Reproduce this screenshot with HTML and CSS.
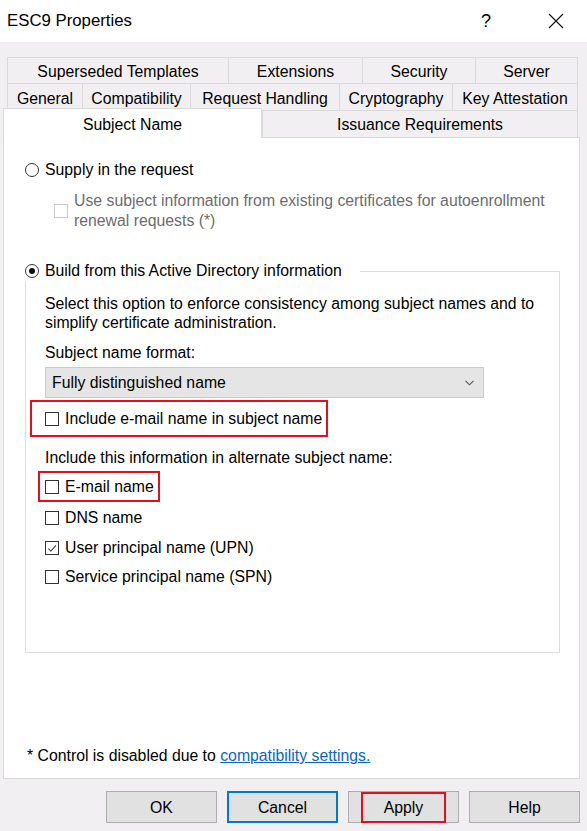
FILE: index.html
```html
<!DOCTYPE html>
<html>
<head>
<meta charset="utf-8">
<link rel="stylesheet" href="styles.css">
</head>
<body>
<div class="titlebar">
  <span class="title">ESC9 Properties</span>
  <span class="help-btn">?</span>
  <span class="close-btn"><svg width="16" height="16" viewBox="0 0 16 16"><path d="M1 1 L15 15 M15 1 L1 15" stroke="#111" stroke-width="1.1" fill="none"/></svg></span>
</div>
<div class="content">
  <div class="tabrow row-a">
    <div class="tab t-superseded">Superseded Templates</div>
    <div class="tab t-extensions">Extensions</div>
    <div class="tab t-security">Security</div>
    <div class="tab t-server">Server</div>
  </div>
  <div class="tabrow row-b">
    <div class="tab t-general">General</div>
    <div class="tab t-compat">Compatibility</div>
    <div class="tab t-request">Request Handling</div>
    <div class="tab t-crypto">Cryptography</div>
    <div class="tab t-key">Key Attestation</div>
  </div>
  <div class="tabrow row-c">
    <div class="tab tab-selected">Subject Name</div>
    <div class="tab t-issuance">Issuance Requirements</div>
  </div>
  <div class="panel">
    <div class="option">
      <span class="rb"></span>
      <span>Supply in the request</span>
    </div>
    <div class="option disabled-opt">
      <span class="cb cb-disabled"></span>
      <span class="disabled-text">Use subject information from existing certificates for autoenrollment renewal requests (*)</span>
    </div>
    <fieldset class="group">
      <legend class="option legend">
        <span class="rb rb-on"></span>
        <span>Build from this Active Directory information</span>
      </legend>
      <p class="desc">Select this option to enforce consistency among subject names and to simplify certificate administration.</p>
      <div class="label-line">Subject name format:</div>
      <div class="select">
        <span>Fully distinguished name</span>
        <svg width="9" height="6" viewBox="0 0 9 6"><path d="M0.5 0.8 L4.5 4.8 L8.5 0.8" stroke="#555" stroke-width="1.1" fill="none"/></svg>
      </div>
      <div class="hl hl-include">
        <span class="cb"></span>
        <span>Include e-mail name in subject name</span>
      </div>
      <div class="label-line alt-label">Include this information in alternate subject name:</div>
      <div class="hl hl-email">
        <span class="cb"></span>
        <span>E-mail name</span>
      </div>
      <div class="check-row">
        <span class="cb"></span>
        <span>DNS name</span>
      </div>
      <div class="check-row">
        <span class="cb"><svg width="13" height="13" viewBox="0 0 13 13"><path d="M2.5 6.5 L5.2 9.3 L10.8 3.2" stroke="#333" stroke-width="1.1" fill="none"/></svg></span>
        <span>User principal name (UPN)</span>
      </div>
      <div class="check-row">
        <span class="cb"></span>
        <span>Service principal name (SPN)</span>
      </div>
    </fieldset>
    <div class="footer-note">* Control is disabled due to <a class="link" href="#">compatibility settings.</a></div>
  </div>
  <div class="buttons">
    <button class="btn">OK</button>
    <button class="btn btn-focus">Cancel</button>
    <button class="btn btn-apply">Apply<span class="apply-mark"></span></button>
    <button class="btn">Help</button>
  </div>
</div>
</body>
</html>
```

FILE: styles.css
```css
html, body {
  margin: 0;
  padding: 0;
}
body {
  width: 587px;
  height: 831px;
  overflow: hidden;
  background: #f1eff1;
  font-family: "Liberation Sans", Arial, sans-serif;
  font-size: 15.8px;
  line-height: 20px;
  color: #000;
}

/* title bar */
.titlebar {
  height: 42px;
  background: #fff;
  display: flex;
  align-items: center;
  padding-left: 7px;
  padding-right: 8px;
}
.title {
  flex: 1;
  font-size: 16.8px;
}
.help-btn {
  width: 46px;
  text-align: center;
  font-size: 18px;
}
.close-btn {
  width: 46px;
  margin-left: 24px;
  display: flex;
  justify-content: center;
}

/* tabs */
.content {
  padding-top: 15px;
}
.tabrow {
  display: flex;
}
.row-a, .row-b {
  margin-left: 7px;
}
.tab {
  box-sizing: border-box;
  border: 1px solid #dbdadb;
  border-right: none;
  border-bottom: none;
  display: flex;
  align-items: center;
  justify-content: center;
  white-space: nowrap;
  padding-top: 2px;
}
.tab:last-child {
  border-right: 1px solid #dbdadb;
}
.row-a .tab { height: 26px; }
.row-b .tab { height: 27px; padding-top: 3px; }
.t-superseded { width: 221px; }
.t-extensions { width: 134px; }
.t-security { width: 113px; }
.t-server { width: 103px; }
.t-general { width: 75px; }
.t-compat { width: 108px; }
.t-request { width: 149px; }
.t-crypto { width: 113px; }
.t-key { width: 126px; }
.row-c {
  margin-left: 3px;
  height: 27px;
  align-items: flex-end;
}
.t-issuance {
  width: 316px;
  height: 27px;
}
.tab-selected {
  width: 259px;
  height: 30px;
  margin-bottom: -1px;
  background: #fff;
  border-right: 1px solid #dbdadb;
  position: relative;
  z-index: 1;
}

/* panel */
.panel {
  box-sizing: border-box;
  margin-left: 3px;
  width: 577px;
  height: 642px;
  border: 1px solid #d9d9d9;
  background: #fff;
  display: flex;
  flex-direction: column;
  padding: 22px 0 12px 21px;
}
.option {
  display: flex;
  align-items: center;
  gap: 6px;
}
.rb {
  box-sizing: border-box;
  width: 14px;
  height: 14px;
  border: 1px solid #333;
  border-radius: 50%;
  display: flex;
  align-items: center;
  justify-content: center;
  flex: none;
}
.rb-on::after {
  content: "";
  width: 6px;
  height: 6px;
  border-radius: 50%;
  background: #111;
}
.cb {
  box-sizing: border-box;
  width: 14px;
  height: 14px;
  border: 1px solid #333;
  background: #fff;
  flex: none;
  display: flex;
}
.cb-disabled {
  border-color: #cccccc;
}
.disabled-opt {
  margin-top: 11px;
  margin-left: 29px;
  gap: 6px;
}
.disabled-text {
  width: 490px;
  color: #6d6d6d;
}

/* group */
.group {
  box-sizing: border-box;
  width: 535px;
  min-width: 0;
  margin: 30px 0 0 0;
  border: 1px solid #dcdcdc;
  padding: 0 0 60px 19px;
}
.legend {
  margin-left: -20px;
  padding: 0 18px 0 0;
  background: #fff;
}
.desc {
  margin: 13px 0 0 0;
  line-height: 19px;
}
.label-line {
  margin-top: 11px;
}
.select {
  box-sizing: border-box;
  margin-top: 4px;
  width: 439px;
  height: 31px;
  background: #e5e5e5;
  border: 1px solid #cccccc;
  display: flex;
  align-items: center;
  justify-content: space-between;
  padding: 1px 9px 0 6px;
}
.hl {
  box-sizing: border-box;
  border: 2px solid #e3101b;
  display: flex;
  align-items: center;
  gap: 6px;
}
.hl-include {
  margin-top: 2px;
  margin-left: -15px;
  width: 298px;
  height: 37px;
  padding-left: 13px;
}
.alt-label {
  margin-top: 11px;
}
.hl-email {
  margin-top: 3px;
  margin-left: -7px;
  width: 122px;
  height: 31px;
  padding-left: 5px;
}
.check-row {
  display: flex;
  align-items: center;
  gap: 6px;
  height: 29.5px;
}
.hl-email + .check-row {
  margin-top: 1.5px;
}
.footer-note {
  margin-top: auto;
  margin-left: 2px;
}
.link {
  color: #0a66c2;
  text-decoration: underline;
}

/* buttons */
.buttons {
  display: flex;
  justify-content: flex-end;
  gap: 10px;
  margin-top: 12px;
  padding-right: 7px;
}
.btn {
  box-sizing: border-box;
  width: 111px;
  height: 32px;
  border: 1px solid #adadad;
  background: #e1e1e1;
  font-family: inherit;
  font-size: 15.8px;
  color: #000;
  padding: 2px 0 0 0;
}
.btn-focus {
  border: 2px solid #0078d7;
}
.btn-apply {
  position: relative;
}
.apply-mark {
  position: absolute;
  top: 0;
  bottom: -1px;
  left: 12px;
  right: 12px;
  border: 2px solid #e3101b;
}
```
